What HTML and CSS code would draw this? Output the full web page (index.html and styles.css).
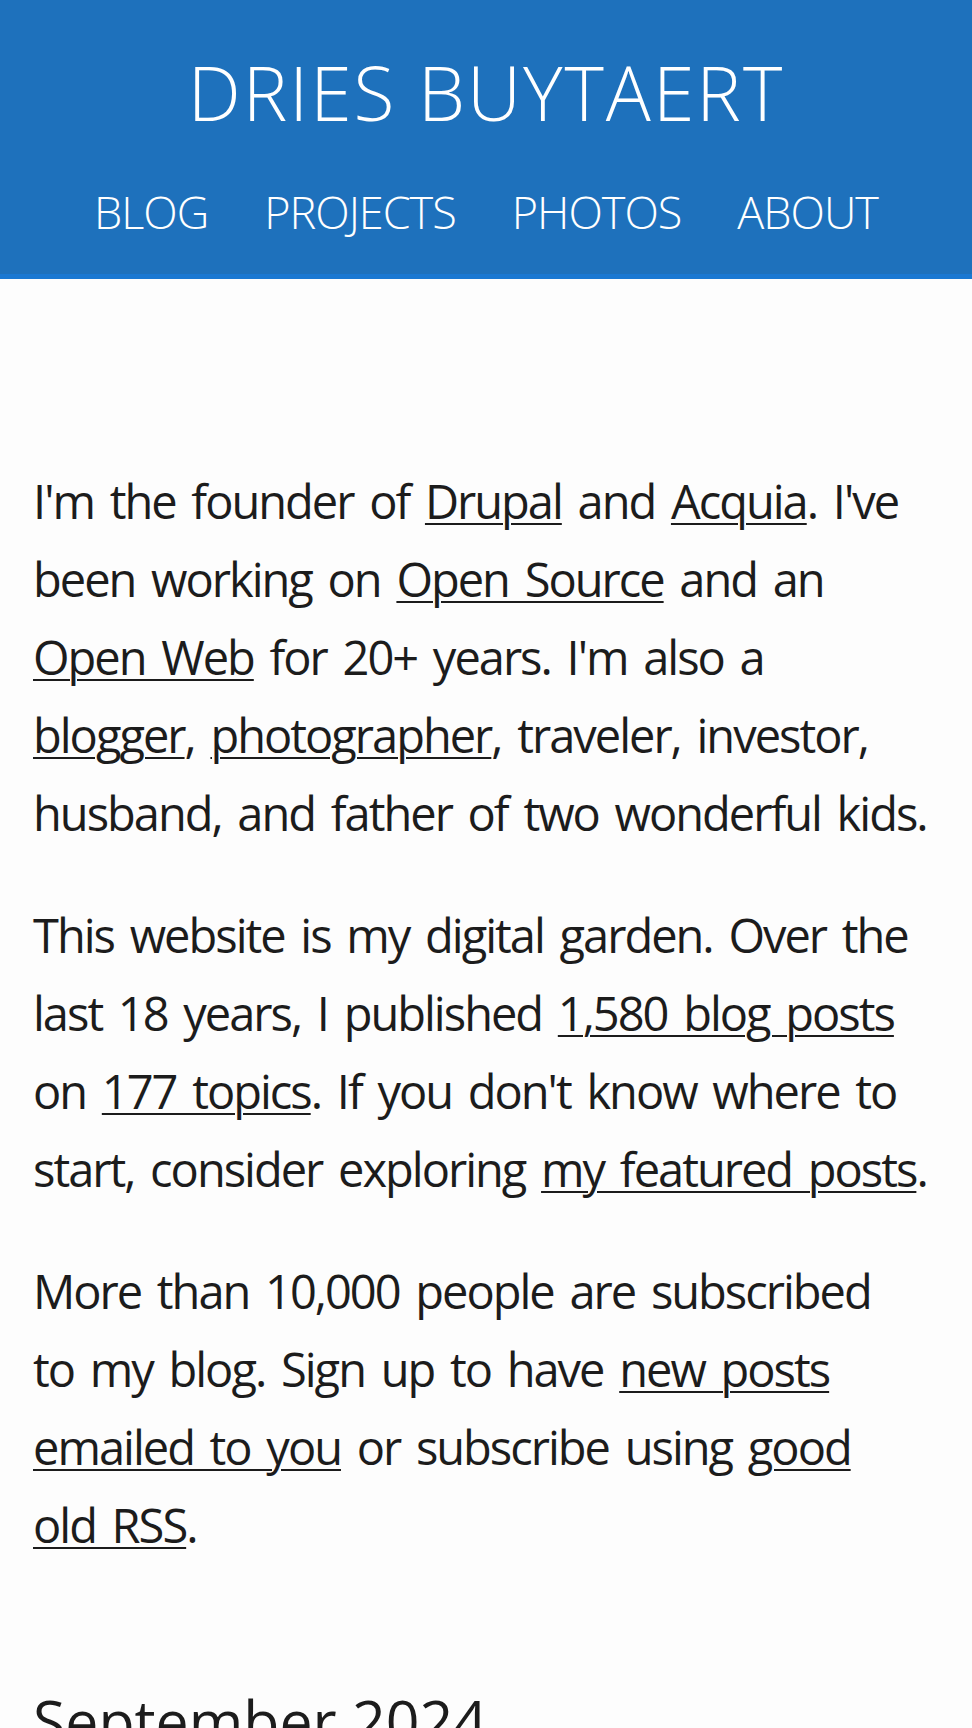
FILE: index.html
```html
<!DOCTYPE html>
<html lang="en">
<head>
    <meta charset="UTF-8">
    <meta name="viewport" content="width=device-width, initial-scale=1.0">
    <title>Dries Buytaert</title>
    <link rel="stylesheet" href="styles.css">
</head>
<body>

    <header class="site-header">
        <h1 class="site-title"><a href="/">Dries Buytaert</a></h1>
        <nav class="site-nav">
            <a href="/blog">Blog</a>
            <a href="/projects">Projects</a>
            <a href="/photos">Photos</a>
            <a href="/about">About</a>
        </nav>
    </header>

    <main class="content">
        <section class="intro">
            <p>I'm the founder of <a href="#">Drupal</a> and <a href="#">Acquia</a>. I've been working on <a href="#">Open Source</a> and an <a href="#">Open Web</a> for 20+ years. I'm also a <a href="#">blogger</a>, <a href="#">photographer</a>, traveler, investor, husband, and father of two wonderful kids.</p>
            <p>This website is my digital garden. Over the last 18 years, I published <a href="#">1,580 blog posts</a> on <a href="#">177 topics</a>. If you don't know where to start, consider exploring <a href="#">my featured posts</a>.</p>
            <p>More than 10,000 people are subscribed to my blog. Sign up to have <a href="#">new posts emailed to you</a> or subscribe using <a href="#">good old RSS</a>.</p>
        </section>

        <section class="archive">
            <h2>September 2024</h2>
        </section>
    </main>

</body>
</html>
```

FILE: styles.css
```css
body {
    margin: 0;
    padding: 0;
    font-family: "Open Sans", "Noto Sans", sans-serif;
    background-color: #fdfdfd;
    color: #1c1c1c;
}
a {
    color: inherit;
}
.site-header {
    background-color: #1e71bc;
    border-bottom: 5px solid #1a78d2;
    padding: 42px 20px 32px;
    text-align: center;
}
.site-title {
    margin: 0;
    font-size: 75px;
    font-weight: 300;
    line-height: 100px;
    letter-spacing: 2px;
    text-transform: uppercase;
}
.site-title a {
    color: #fff;
    text-decoration: none;
}
.site-nav {
    display: flex;
    justify-content: center;
    gap: 56px;
    margin-top: 40px;
}
.site-nav a {
    color: #fff;
    text-decoration: none;
    text-transform: uppercase;
    font-size: 45px;
    font-weight: 300;
    line-height: 60px;
    letter-spacing: -1px;
}
.content {
    padding: 183px 45px 40px 33px;
}
.intro p {
    margin: 0 0 44px;
    font-size: 47px;
    line-height: 78px;
    letter-spacing: -2px;
    word-spacing: 5.5px;
}
.intro a {
    text-underline-offset: 4px;
    text-decoration-thickness: 2px;
}
.archive h2 {
    margin: 116px 0 0;
    font-size: 59px;
    font-weight: 400;
    line-height: 80px;
}
```
